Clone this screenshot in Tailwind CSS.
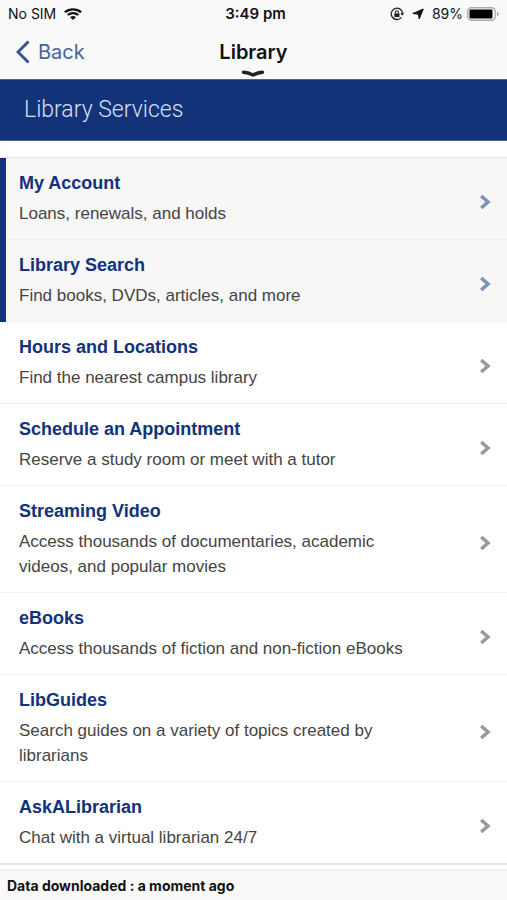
<!DOCTYPE html>
<html lang="en">
<head>
<meta charset="utf-8">
<meta name="viewport" content="width=device-width, initial-scale=1">
<title>Library</title>
<script src="https://cdn.jsdelivr.net/npm/@tailwindcss/browser@4"></script>
</head>
<body class="bg-white">
<svg class="hidden"><symbol id="chevron" viewBox="0 0 12 16"><path d="M2.2 2L9 8l-6.8 6" fill="none" stroke="currentColor" stroke-width="3.5"/></symbol></svg>
<div class="flex min-h-screen flex-col font-['Liberation_Sans',Arial,sans-serif]">
  <header class="bg-[#f9f9f9] font-['Inter',sans-serif] text-[#111]">
    <div class="grid h-7 grid-cols-3 items-center px-2 text-sm">
      <div class="flex items-center gap-2">
        <span>No SIM</span>
        <svg class="h-3 w-[18px]" viewBox="0 0 16 12" preserveAspectRatio="none" fill="none" stroke="#111" stroke-width="2.2" aria-label="Wi-Fi"><path d="M.8 4.2a10.4 10.4 0 0 1 14.4 0M3.4 7a6.6 6.6 0 0 1 9.2 0"/><path d="M8 12L5.4 9.3a3.8 3.8 0 0 1 5.2 0z" fill="#111" stroke="none"/></svg>
      </div>
      <div class="whitespace-nowrap pl-1 text-center text-[15px] font-semibold">3:49 pm</div>
      <div class="flex items-center justify-end gap-2">
        <svg class="size-3.5 shrink-0" viewBox="0 0 14 14" fill="none" stroke="#222" aria-label="Rotation lock"><path d="M11.4 10.4A5.7 5.7 0 1 1 12.6 6" stroke-width="1.3"/><path d="M10.4 6h3.6l-1.8 2.8z" fill="#222" stroke="none"/><path d="M4.3 6.4h5.2v3.7H4.3z" fill="#222" stroke="none"/><path d="M5.4 6.4V5.2a1.5 1.5 0 0 1 3 0v1.2" stroke-width="1.1"/></svg>
        <svg class="size-3 shrink-0" viewBox="0 0 12 12" fill="#111" stroke="#111" stroke-linejoin="round" aria-label="Location"><path d="M11.3 1L7.2 11 6.4 6.2.8 5.5z"/></svg>
        <div class="flex items-center gap-1">
          <span>89%</span>
          <svg class="h-3.5 w-8 shrink-0" viewBox="0 0 32 14" aria-label="Battery"><rect x=".8" y=".8" width="27.4" height="12.4" rx="3.5" fill="#fff" stroke="#aaa" stroke-width="1.4"/><rect x="2.5" y="2.5" width="23" height="9" rx="1" fill="#000"/><path d="M30 5c2 .6 2 3.4 0 4z" fill="#999"/></svg>
        </div>
      </div>
    </div>
    <div class="grid h-[51px] grid-cols-3 items-center px-4 pb-[3px]">
      <button class="flex items-center gap-2 text-xl text-[#48639a]">
        <svg class="h-6 w-3.5" viewBox="0 0 14 24" fill="none" stroke="#36558c" stroke-width="3"><path d="M12.5 1.5L2 12l10.5 10.5"/></svg>
        Back
      </button>
      <div class="relative text-center">
        <h1 class="text-xl font-semibold">Library</h1>
        <svg class="absolute -bottom-3 left-1/2 h-2 w-6 -translate-x-1/2" viewBox="0 0 24 8" fill="none" stroke="#222" stroke-width="3.4" stroke-linecap="round" stroke-linejoin="round"><path d="M2.5 2.2Q7 2.4 12 5Q17 2.4 21.5 2.2"/></svg>
      </div>
    </div>
  </header>
  <h2 class="border-y border-[#48639a] bg-[#12327a] px-6 font-['Roboto',sans-serif] text-[23px] leading-[60px] font-light text-[#d5e0f2]">Library Services</h2>
  <nav class="mt-4 border-t border-[#e6e6e6] text-[#444]">
    <div class="border-l-6 border-[#12327a] bg-[#f7f7f7]">
      <a href="#" class="flex items-center border-b border-[#eee] pt-3 pr-4 pb-[13px] pl-[13px]"><span class="flex-1"><strong class="block text-lg leading-[26px] text-[#12327a]">My Account</strong><span class="mt-[5px] block max-w-[400px] text-[17px] leading-[25px]">Loans, renewals, and holds</span></span><svg class="mt-2 ml-2 h-4 w-3 text-[#7b92ba]"><use href="#chevron"/></svg></a>
      <a href="#" class="flex items-center border-b border-[#f3f3f3] pt-3 pr-4 pb-[13px] pl-[13px]"><span class="flex-1"><strong class="block text-lg leading-[26px] text-[#12327a]">Library Search</strong><span class="mt-[5px] block max-w-[400px] text-[17px] leading-[25px]">Find books, DVDs, articles, and more</span></span><svg class="mt-2 ml-2 h-4 w-3 text-[#7b92ba]"><use href="#chevron"/></svg></a>
    </div>
    <a href="#" class="flex items-center border-b border-[#f3f3f3] pt-3 pr-4 pb-[13px] pl-[19px]"><span class="flex-1"><strong class="block text-lg leading-[26px] text-[#12327a]">Hours and Locations</strong><span class="mt-[5px] block max-w-[400px] text-[17px] leading-[25px]">Find the nearest campus library</span></span><svg class="mt-2 ml-2 h-4 w-3 text-[#999]"><use href="#chevron"/></svg></a>
    <a href="#" class="flex items-center border-b border-[#f3f3f3] pt-3 pr-4 pb-[13px] pl-[19px]"><span class="flex-1"><strong class="block text-lg leading-[26px] text-[#12327a]">Schedule an Appointment</strong><span class="mt-[5px] block max-w-[400px] text-[17px] leading-[25px]">Reserve a study room or meet with a tutor</span></span><svg class="mt-2 ml-2 h-4 w-3 text-[#999]"><use href="#chevron"/></svg></a>
    <a href="#" class="flex items-center border-b border-[#f3f3f3] pt-3 pr-4 pb-[13px] pl-[19px]"><span class="flex-1"><strong class="block text-lg leading-[26px] text-[#12327a]">Streaming Video</strong><span class="mt-[5px] block max-w-[400px] text-[17px] leading-[25px]">Access thousands of documentaries, academic videos, and popular movies</span></span><svg class="mt-2 ml-2 h-4 w-3 text-[#999]"><use href="#chevron"/></svg></a>
    <a href="#" class="flex items-center border-b border-[#f3f3f3] pt-3 pr-4 pb-[13px] pl-[19px]"><span class="flex-1"><strong class="block text-lg leading-[26px] text-[#12327a]">eBooks</strong><span class="mt-[5px] block max-w-[400px] text-[17px] leading-[25px]">Access thousands of fiction and non-fiction eBooks</span></span><svg class="mt-2 ml-2 h-4 w-3 text-[#999]"><use href="#chevron"/></svg></a>
    <a href="#" class="flex items-center border-b border-[#f3f3f3] pt-3 pr-4 pb-[13px] pl-[19px]"><span class="flex-1"><strong class="block text-lg leading-[26px] text-[#12327a]">LibGuides</strong><span class="mt-[5px] block max-w-[400px] text-[17px] leading-[25px]">Search guides on a variety of topics created by librarians</span></span><svg class="mt-2 ml-2 h-4 w-3 text-[#999]"><use href="#chevron"/></svg></a>
    <a href="#" class="flex items-center border-b-2 border-[#e6e6e6] pt-3 pr-4 pb-[13px] pl-[19px]"><span class="flex-1"><strong class="block text-lg leading-[26px] text-[#12327a]">AskALibrarian</strong><span class="mt-[5px] block max-w-[400px] text-[17px] leading-[25px]">Chat with a virtual librarian 24/7</span></span><svg class="mt-2 ml-2 h-4 w-3 text-[#999]"><use href="#chevron"/></svg></a>
  </nav>
  <footer class="mt-auto border-t-2 border-[#eee] bg-[#f9f9f9] px-[7px] font-['Inter',sans-serif] text-sm leading-[29px] font-bold text-[#111]">Data downloaded : a moment ago</footer>
</div>
</body>
</html>
